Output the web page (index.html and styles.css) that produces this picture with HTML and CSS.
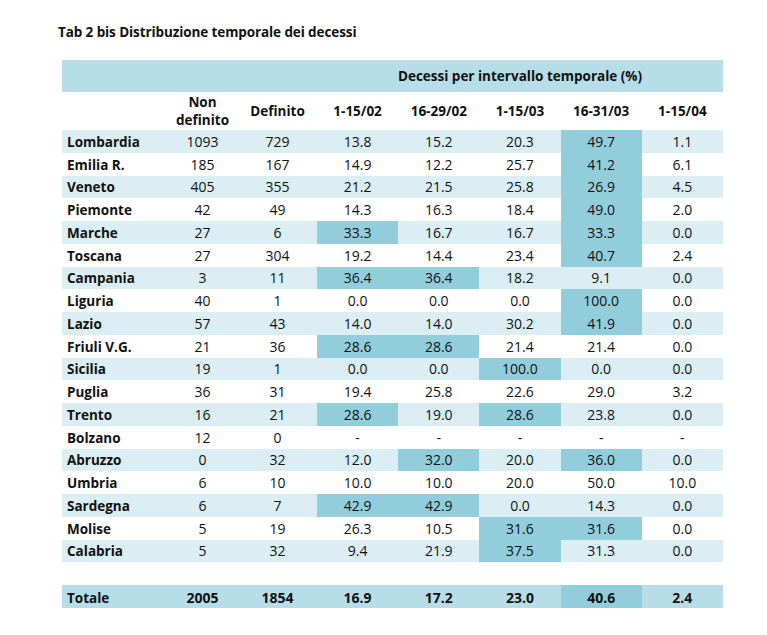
FILE: index.html
```html
<!DOCTYPE html>
<html lang="it">
<head>
<meta charset="utf-8">
<title>Tab 2 bis</title>
<link rel="stylesheet" href="styles.css">
</head>
<body>
<div class="page">
  <h1 class="title">Tab 2 bis Distribuzione temporale dei decessi</h1>
  <table class="tab">
    <colgroup>
      <col class="c-reg"><col class="c-nd"><col class="c-def">
      <col class="c-p"><col class="c-p"><col class="c-p"><col class="c-p"><col class="c-p">
    </colgroup>
    <thead>
      <tr class="band">
        <th colspan="3"></th>
        <th colspan="5">Decessi per intervallo temporale (%)</th>
      </tr>
      <tr class="heads">
        <th></th>
        <th>Non<br>definito</th>
        <th>Definito</th>
        <th>1-15/02</th>
        <th>16-29/02</th>
        <th>1-15/03</th>
        <th>16-31/03</th>
        <th>1-15/04</th>
      </tr>
    </thead>
    <tbody>
      <tr class="s"><th>Lombardia</th><td>1093</td><td>729</td><td>13.8</td><td>15.2</td><td>20.3</td><td class="h">49.7</td><td>1.1</td></tr>
      <tr><th>Emilia R.</th><td>185</td><td>167</td><td>14.9</td><td>12.2</td><td>25.7</td><td class="h">41.2</td><td>6.1</td></tr>
      <tr class="s"><th>Veneto</th><td>405</td><td>355</td><td>21.2</td><td>21.5</td><td>25.8</td><td class="h">26.9</td><td>4.5</td></tr>
      <tr><th>Piemonte</th><td>42</td><td>49</td><td>14.3</td><td>16.3</td><td>18.4</td><td class="h">49.0</td><td>2.0</td></tr>
      <tr class="s"><th>Marche</th><td>27</td><td>6</td><td class="h">33.3</td><td>16.7</td><td>16.7</td><td class="h">33.3</td><td>0.0</td></tr>
      <tr><th>Toscana</th><td>27</td><td>304</td><td>19.2</td><td>14.4</td><td>23.4</td><td class="h">40.7</td><td>2.4</td></tr>
      <tr class="s"><th>Campania</th><td>3</td><td>11</td><td class="h">36.4</td><td class="h">36.4</td><td>18.2</td><td>9.1</td><td>0.0</td></tr>
      <tr><th>Liguria</th><td>40</td><td>1</td><td>0.0</td><td>0.0</td><td>0.0</td><td class="h">100.0</td><td>0.0</td></tr>
      <tr class="s"><th>Lazio</th><td>57</td><td>43</td><td>14.0</td><td>14.0</td><td>30.2</td><td class="h">41.9</td><td>0.0</td></tr>
      <tr><th>Friuli V.G.</th><td>21</td><td>36</td><td class="h">28.6</td><td class="h">28.6</td><td>21.4</td><td>21.4</td><td>0.0</td></tr>
      <tr class="s"><th>Sicilia</th><td>19</td><td>1</td><td>0.0</td><td>0.0</td><td class="h">100.0</td><td>0.0</td><td>0.0</td></tr>
      <tr><th>Puglia</th><td>36</td><td>31</td><td>19.4</td><td>25.8</td><td>22.6</td><td>29.0</td><td>3.2</td></tr>
      <tr class="s"><th>Trento</th><td>16</td><td>21</td><td class="h">28.6</td><td>19.0</td><td class="h">28.6</td><td>23.8</td><td>0.0</td></tr>
      <tr><th>Bolzano</th><td>12</td><td>0</td><td>-</td><td>-</td><td>-</td><td>-</td><td>-</td></tr>
      <tr class="s"><th>Abruzzo</th><td>0</td><td>32</td><td>12.0</td><td class="h">32.0</td><td>20.0</td><td class="h">36.0</td><td>0.0</td></tr>
      <tr><th>Umbria</th><td>6</td><td>10</td><td>10.0</td><td>10.0</td><td>20.0</td><td>50.0</td><td>10.0</td></tr>
      <tr class="s"><th>Sardegna</th><td>6</td><td>7</td><td class="h">42.9</td><td class="h">42.9</td><td>0.0</td><td>14.3</td><td>0.0</td></tr>
      <tr><th>Molise</th><td>5</td><td>19</td><td>26.3</td><td>10.5</td><td class="h">31.6</td><td class="h">31.6</td><td>0.0</td></tr>
      <tr class="s"><th>Calabria</th><td>5</td><td>32</td><td>9.4</td><td>21.9</td><td class="h">37.5</td><td>31.3</td><td>0.0</td></tr>
      <tr class="gap"><td colspan="8"></td></tr>
      <tr class="tot"><th>Totale</th><td>2005</td><td>1854</td><td>16.9</td><td>17.2</td><td>23.0</td><td class="h">40.6</td><td>2.4</td></tr>
    </tbody>
  </table>
</div>
</body>
</html>
```

FILE: styles.css
```css
html, body {
  margin: 0;
  padding: 0;
  background: #ffffff;
}

body {
  font-family: "Open Sans", "Noto Sans", sans-serif;
  color: #111111;
}

.page {
  padding: 22px 0 0 58px;
}

.title {
  margin: 0 0 18px 0;
  font-size: 13.5px;
  font-weight: 700;
  line-height: 20px;
  letter-spacing: -0.1px;
}

.tab {
  margin-left: 4px;
  width: 661px;
  border-collapse: collapse;
  border-spacing: 0;
  table-layout: fixed;
  font-size: 14px;
}

.c-reg { width: 105px; }
.c-nd { width: 71px; }
.c-def { width: 79px; }
.c-p { width: 81.2px; }

.tab th,
.tab td {
  padding: 0;
  text-align: center;
  white-space: nowrap;
}

.tab tbody th {
  text-align: left;
  padding-left: 5px;
  font-weight: 700;
  font-size: 13.5px;
}

.band th {
  background: #b7dee8;
  height: 32px;
  font-weight: 700;
  font-size: 13.5px;
}

.heads th {
  height: 38px;
  font-weight: 700;
  font-size: 13.5px;
  line-height: 18px;
}

.tab tbody tr {
  height: 22.75px;
}

.tab tbody td,
.tab tbody th {
  line-height: 18px;
  padding-top: 1px;
}

.tab tr.s th,
.tab tr.s td {
  background: #daeef3;
}

.tab td.h,
.tab tr.s td.h {
  background: #92cddc;
}

.tab tr.gap {
  height: 23px;
}

.tab tr.gap td {
  background: #ffffff;
}

.tab tr.tot th,
.tab tr.tot td {
  background: #b7dee8;
  font-weight: 700;
  padding-top: 3px;
}

.tab tr.tot td.h {
  background: #92cddc;
}
```
